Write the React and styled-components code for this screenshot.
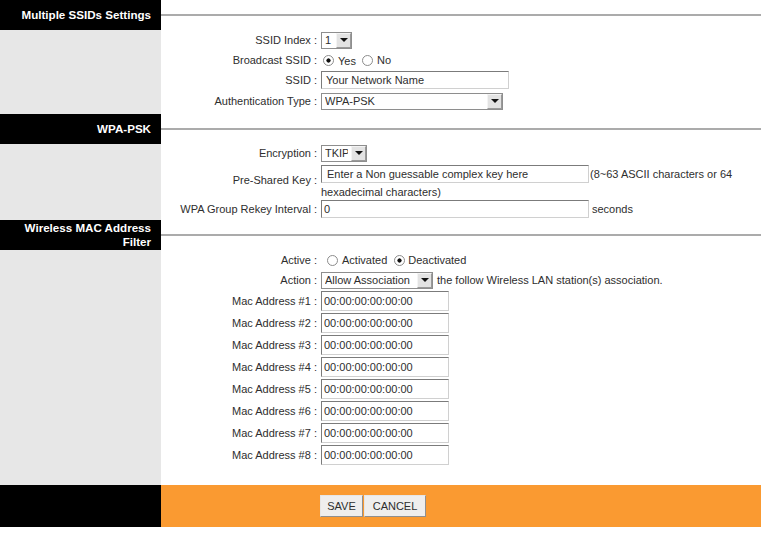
import React from "react";
import styled, { createGlobalStyle } from "styled-components";

const Global = createGlobalStyle`
  html, body { margin: 0; padding: 0; background: #fff; }
  body {
    font-family: "Liberation Sans", Arial, Helvetica, sans-serif;
    font-size: 11px;
    color: #2e2e2e;
  }
`;

const Page = styled.div`
  width: 761px;
  display: flex;
  flex-direction: column;
`;

const HeadRow = styled.div`
  display: flex;
  height: 30px;
`;

const HeadTitle = styled.div`
  flex: none;
  width: 161px;
  box-sizing: border-box;
  padding-right: 10px;
  background: #000;
  color: #fff;
  font-weight: bold;
  font-size: 11.6px;
  line-height: 14px;
  text-align: right;
  display: flex;
  align-items: center;
  justify-content: flex-end;
`;

const HeadLine = styled.div`
  flex: 1;
  display: flex;
  align-items: center;
`;

const Rule = styled.div`
  width: 100%;
  height: 2px;
  background: #ababab;
`;

const BodyRow = styled.div`
  display: flex;
`;

const SideFill = styled.div`
  flex: none;
  width: 161px;
  background: #e7e7e7;
`;

const Content = styled.div`
  flex: 1;
  display: flex;
  flex-direction: column;
  padding-bottom: ${(p) => p.$pb || 0}px;
`;

const FieldRow = styled.div`
  display: grid;
  grid-template-columns: 160px 1fr;
  align-items: center;
  height: ${(p) => p.$h}px;
`;

const Label = styled.div`
  text-align: right;
  padding-right: 4px;
  white-space: nowrap;
`;

const Field = styled.div`
  display: flex;
  align-items: center;
  white-space: nowrap;
`;

const FieldStack = styled.div`
  display: flex;
  flex-direction: column;
`;

const StackLine = styled.div`
  display: flex;
  align-items: center;
  height: ${(p) => p.$h}px;
  white-space: nowrap;
`;

const TextInput = styled.input`
  box-sizing: border-box;
  width: ${(p) => p.$w}px;
  height: ${(p) => p.$h || 18}px;
  margin: 0;
  padding: 0 ${(p) => p.$pl || 3}px;
  border: 1px solid;
  border-color: #7b7b7b #d0d0d0 #d0d0d0 #7b7b7b;
  background: #fff;
  font-family: "Liberation Sans", Arial, sans-serif;
  font-size: 11px;
  color: #2e2e2e;
  outline: none;
`;

const SelectWrap = styled.span`
  position: relative;
  display: inline-block;
  width: ${(p) => p.$w}px;
  height: 17px;
`;

const NativeSelect = styled.select`
  appearance: none;
  -webkit-appearance: none;
  box-sizing: border-box;
  width: 100%;
  height: 100%;
  margin: 0;
  padding: 0 18px 0 3px;
  border: 1px solid #8e8e8e;
  border-radius: 0;
  background: #fff;
  font-family: "Liberation Sans", Arial, sans-serif;
  font-size: 11px;
  color: #2e2e2e;
  outline: none;
`;

const ArrowBtn = styled.span`
  position: absolute;
  top: 1px;
  right: 1px;
  bottom: 1px;
  width: 15px;
  box-sizing: border-box;
  background: #e3e3e3;
  border: 1px solid;
  border-color: #f4f4f4 #9a9a9a #9a9a9a #f4f4f4;
  pointer-events: none;
  &::after {
    content: "";
    position: absolute;
    left: 50%;
    top: 50%;
    margin-left: -4px;
    margin-top: -2px;
    border-left: 4px solid transparent;
    border-right: 4px solid transparent;
    border-top: 4px solid #111;
  }
`;

const Radio = styled.input.attrs({ type: "radio" })`
  appearance: none;
  -webkit-appearance: none;
  width: 11px;
  height: 11px;
  margin: 0 ${(p) => p.$mr || 4}px 0 ${(p) => p.$ml || 0}px;
  border: 1px solid #8c8c8c;
  border-radius: 50%;
  background: #fff;
  box-sizing: border-box;
  &:checked {
    background: radial-gradient(circle, #111 0 1.8px, #fff 2.4px);
  }
`;

const RadioText = styled.span`
  margin-right: ${(p) => p.$mr || 6}px;
  position: relative;
  top: ${(p) => p.$dy || 0}px;
`;

const Note = styled.span`
  margin-left: ${(p) => p.$ml || 0}px;
`;

const FootRow = styled.div`
  display: flex;
  height: 42px;
`;

const FootSide = styled.div`
  flex: none;
  width: 161px;
  background: #000;
`;

const FootBar = styled.div`
  flex: 1;
  background: #fa9a31;
  display: flex;
  align-items: center;
  padding-left: 159px;
`;

const Button = styled.button`
  box-sizing: border-box;
  width: ${(p) => p.$w}px;
  height: 22px;
  margin: 0 1px 0 0;
  padding: 0;
  background: #efeeed;
  border: 1px solid;
  border-color: #e6e6e6 #8f8f8f #8f8f8f #e6e6e6;
  font-family: "Liberation Sans", Arial, sans-serif;
  font-size: 11px;
  color: #2e2e2e;
`;

function Select({ w, value, options }) {
  return (
    <SelectWrap $w={w}>
      <NativeSelect defaultValue={value}>
        {options.map((o) => (
          <option key={o}>{o}</option>
        ))}
      </NativeSelect>
      <ArrowBtn />
    </SelectWrap>
  );
}

function Section({ title, children }) {
  return (
    <>
      <HeadRow>
        <HeadTitle>{title}</HeadTitle>
        <HeadLine>
          <Rule />
        </HeadLine>
      </HeadRow>
      <BodyRow>
        <SideFill />
        {children}
      </BodyRow>
    </>
  );
}

const macs = [1, 2, 3, 4, 5, 6, 7, 8];

export default function App() {
  return (
    <Page>
      <Global />
      <Section title="Multiple SSIDs Settings">
        <Content>
          <FieldRow $h={20}>
            <Label>SSID Index :</Label>
            <Field>
              <Select w={31} value="1" options={["1", "2", "3", "4"]} />
            </Field>
          </FieldRow>
          <FieldRow $h={20}>
            <Label>Broadcast SSID :</Label>
            <Field>
              <Radio name="bcast" defaultChecked $ml={2} />
              <RadioText $dy={1} $mr={6}>Yes</RadioText>
              <Radio name="bcast" />
              <RadioText>No</RadioText>
            </Field>
          </FieldRow>
          <FieldRow $h={20}>
            <Label>SSID :</Label>
            <Field>
              <TextInput $w={188} $pl={4} defaultValue="Your Network Name" />
            </Field>
          </FieldRow>
          <FieldRow $h={22}>
            <Label>Authentication Type :</Label>
            <Field>
              <Select w={182} value="WPA-PSK" options={["Disabled", "WEP-64Bits", "WEP-128Bits", "WPA-PSK", "WPA2-PSK"]} />
            </Field>
          </FieldRow>
          <FieldRow $h={2} />
        </Content>
      </Section>

      <Section title="WPA-PSK">
        <Content>
          <FieldRow $h={18}>
            <Label>Encryption :</Label>
            <Field>
              <Select w={46} value="TKIP" options={["TKIP", "AES"]} />
            </Field>
          </FieldRow>
          <FieldRow $h={36}>
            <Label>Pre-Shared Key :</Label>
            <FieldStack>
              <StackLine $h={24}>
                <TextInput $w={268} $pl={5} defaultValue="Enter a Non guessable complex key here" />
                <Note $ml={1}>(8~63 ASCII characters or 64</Note>
              </StackLine>
              <StackLine $h={12}>hexadecimal characters)</StackLine>
            </FieldStack>
          </FieldRow>
          <FieldRow $h={22}>
            <Label>WPA Group Rekey Interval :</Label>
            <Field>
              <TextInput $w={268} $pl={2} defaultValue="0" />
              <Note $ml={3}>seconds</Note>
            </Field>
          </FieldRow>
        </Content>
      </Section>

      <Section
        title={
          <span>
            Wireless MAC Address
            <br />
            Filter
          </span>
        }
      >
        <Content $pb={19}>
          <FieldRow $h={20}>
            <Label>Active :</Label>
            <Field>
              <Radio name="active" $ml={6} />
              <RadioText $mr={7}>Activated</RadioText>
              <Radio name="active" defaultChecked $mr={3} />
              <RadioText>Deactivated</RadioText>
            </Field>
          </FieldRow>
          <FieldRow $h={20}>
            <Label>Action :</Label>
            <Field>
              <Select w={112} value="Allow Association" options={["Allow Association", "Deny Association"]} />
              <Note $ml={4}>the follow Wireless LAN station(s) association.</Note>
            </Field>
          </FieldRow>
          {macs.map((n) => (
            <FieldRow $h={22} key={n}>
              <Label>Mac Address #{n} :</Label>
              <Field>
                <TextInput $w={128} $h={20} $pl={2} defaultValue="00:00:00:00:00:00" />
              </Field>
            </FieldRow>
          ))}
        </Content>
      </Section>

      <FootRow>
        <FootSide />
        <FootBar>
          <Button $w={43}>SAVE</Button>
          <Button $w={62}>CANCEL</Button>
        </FootBar>
      </FootRow>
    </Page>
  );
}
